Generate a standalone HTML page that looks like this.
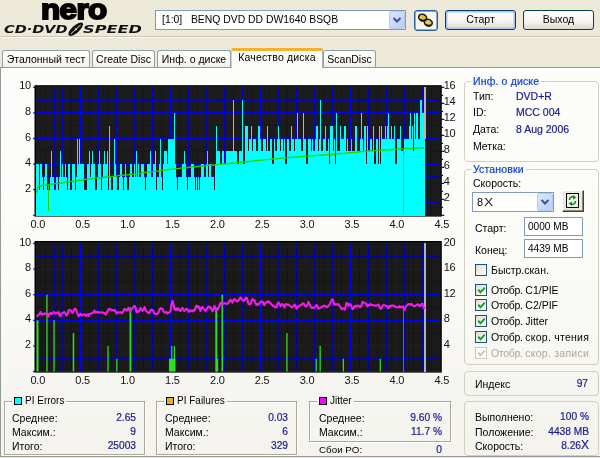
<!DOCTYPE html>
<html lang="ru">
<head>
<meta charset="utf-8">
<title>Nero CD-DVD Speed</title>
<style>
*{box-sizing:border-box;margin:0;padding:0}
html,body{width:600px;height:458px;overflow:hidden}
body{background:#ece9d8;font-family:"Liberation Sans",sans-serif;font-size:10.5px;color:#000;position:relative}
.abs,.t,.ax,.v{position:absolute;white-space:nowrap}
.t{line-height:12px;height:12px}
.v{line-height:12px;height:12px;color:#1a1a94;text-align:right;font-size:10.2px;-webkit-text-stroke:0.2px #1a1a94}
.ax{font-size:11px;line-height:14px;height:14px;color:#111;letter-spacing:-0.2px}
.ax.r{text-align:right}
#sep{position:absolute;left:0;top:36px;width:600px;height:2px;border-top:1px solid #c9c6b8;border-bottom:1px solid #fbfaf4}
#pane{position:absolute;left:0;top:67px;width:604px;height:390px;border:1px solid #919b9c;background:linear-gradient(#fdfdfb,#fbfbf8 45%,#f4f3ee);}
.tab{position:absolute;top:50px;height:18px;border:1px solid #8fa0a8;border-bottom:none;border-radius:3px 3px 0 0;background:linear-gradient(#ffffff,#f7f6f1 70%,#ecebe5);text-align:center;line-height:17px;font-size:10.5px}
.tab.act{top:48px;height:20px;background:#fcfcfb;border-top:3px solid #f2b22c;border-left-color:#c8d0d4;border-right-color:#a8b2b6;line-height:13px;z-index:3;letter-spacing:0.15px;border-radius:2px 2px 0 0}
.combo{position:absolute;border:1px solid #7f9db9;background:#fff}
.dd{position:absolute;border:1px solid #b4c8f6;border-radius:2px;background:linear-gradient(135deg,#dbe6fd,#b9cdf8)}
.btn{position:absolute;border:1px solid #003c74;border-radius:3px;background:linear-gradient(#ffffff,#f4f3ee 60%,#dcd8cc);text-align:center;font-size:10.5px}
.gb{position:absolute;border:1px solid #d0d0bf;border-radius:4px}
.gb .ttl{position:absolute;top:-7px;left:6px;letter-spacing:0.15px;-webkit-text-stroke:0.2px #0b3fe0;padding:0 2px;background:#fbfbf8;color:#0b3fe0;line-height:12px;height:12px;font-size:10.5px;white-space:nowrap}
.cg{position:absolute;border:1px solid #aca899;box-shadow:1px 1px 0 #fff, inset 1px 1px 0 #fff}
.cg .ttl{position:absolute;top:-7px;left:7px;padding:0 2px 0 2px;background:#f5f4ef;line-height:12px;height:12px;white-space:nowrap;font-size:10px}
.sq{display:inline-block;width:8px;height:8px;border:1px solid #000;vertical-align:-1px;margin-right:3px}
.cb{position:absolute;width:12px;height:12px;border:1px solid #1c5180;background:linear-gradient(135deg,#dcdcd7,#ffffff)}
.cb svg{position:absolute;left:1px;top:1px}
.edit{position:absolute;border:1px solid #7f9db9;background:#fff;line-height:18px;padding-left:3px;font-size:10.1px}
#charts{position:absolute;left:0;top:0}
#wrap{position:absolute;left:0;top:0;width:600px;height:458px;will-change:transform;opacity:0.999}
</style>
</head>
<body>
<div id="wrap">
<!-- logo -->
<div class="abs" id="nero" style="left:41.2px;top:-6px;font:bold 28px/32px 'Liberation Sans',sans-serif;letter-spacing:-0.5px;-webkit-text-stroke:1.9px #000;color:#000;transform-origin:0 0;transform:scaleX(1.12)">nero</div>
<div class="abs" id="cds" style="left:3.5px;top:23px;font:italic bold 11px/14px 'DejaVu Sans','Liberation Sans',sans-serif;transform-origin:0 0;transform:scaleX(1.32);letter-spacing:0px;color:#111">CD·DVD</div>
<svg class="abs" style="left:66px;top:21px" width="20" height="17" viewBox="0 0 20 17"><g transform="translate(9.7 8.2) rotate(-42)"><ellipse cx="0" cy="0" rx="9.2" ry="3.7" fill="#0c0c0c"/><path d="M-6.5,0.2H6.5" stroke="#e8e6da" stroke-width="0.9"/><circle cx="0" cy="0.2" r="1" fill="#f4f2e6"/></g></svg>
<div class="abs" id="spd" style="left:82.5px;top:23px;font:italic bold 11px/14px 'DejaVu Sans','Liberation Sans',sans-serif;transform-origin:0 0;transform:scaleX(1.47);color:#111">SPEED</div>

<!-- drive combo -->
<div class="combo" style="left:155px;top:10px;width:251px;height:20px"></div>
<div class="t" style="left:162px;top:14px;font-size:10.4px">[1:0]&nbsp;&nbsp; BENQ DVD DD DW1640 BSQB</div>
<div class="dd" style="left:389px;top:11px;width:16px;height:18px"><svg width="14" height="16" viewBox="0 0 14 16"><path d="M3.5,6 L7,9.5 L10.5,6" fill="none" stroke="#3a5490" stroke-width="2"/></svg></div>
<!-- icon button -->
<div class="btn" style="left:414px;top:9.5px;width:24px;height:21px;border-color:#2a5f9e;background:#f6f6f3;box-shadow:inset 0 0 0 0.5px #2a5f9e"><svg width="22" height="19" viewBox="0 0 22 19" style="position:absolute;left:0;top:0"><g stroke="#141400" stroke-width="1.5" fill="#f0c818"><ellipse cx="7.6" cy="6.6" rx="4" ry="3.3" transform="rotate(20 7.6 6.6)"/><ellipse cx="13.3" cy="11.7" rx="4" ry="3.3" transform="rotate(20 13.3 11.7)"/></g><path d="M5.5,8.5 a4,3 0 0 0 5,0.5 M11,13.6 a4,3 0 0 0 5,0.5" stroke="#141400" stroke-width="1.6" fill="none"/><ellipse cx="7.8" cy="5.6" rx="0.9" ry="1.3" fill="#9fb4e0"/><ellipse cx="13.5" cy="10.7" rx="0.9" ry="1.3" fill="#c8d4f0"/></svg></div>
<!-- buttons -->
<div class="btn" style="left:445px;top:10px;width:71px;height:20px;line-height:17px;box-shadow:inset 0 0 0 1.5px #a9c2f0">Старт</div>
<div class="btn" style="left:523px;top:10px;width:71px;height:20px;line-height:17px">Выход</div>

<div id="sep"></div>

<!-- tabs -->
<div class="tab" style="left:2px;width:88px">Эталонный тест</div>
<div class="tab" style="left:92px;width:63px">Create Disc</div>
<div class="tab" style="left:157px;width:74px">Инф. о диске</div>
<div class="tab act" style="left:231px;width:92px">Качество диска</div>
<div class="tab" style="left:323px;width:53px">ScanDisc</div>
<div id="pane"></div>

<svg id="charts" width="600" height="458" viewBox="0 0 600 458" shape-rendering="crispEdges">
<g shape-rendering="auto"><rect x="34.5" y="85.2" width="407.3" height="131.4" fill="#000"/><rect x="36" y="86.4" width="404.6" height="129" fill="#1c1c1c"/></g>
<path d="M45.0,87.3V215.3M54.0,87.3V215.3M62.9,87.3V215.3M71.9,87.3V215.3M89.9,87.3V215.3M98.8,87.3V215.3M107.8,87.3V215.3M116.8,87.3V215.3M134.8,87.3V215.3M143.7,87.3V215.3M152.7,87.3V215.3M161.7,87.3V215.3M179.6,87.3V215.3M188.6,87.3V215.3M197.6,87.3V215.3M206.6,87.3V215.3M224.5,87.3V215.3M233.5,87.3V215.3M242.5,87.3V215.3M251.5,87.3V215.3M269.4,87.3V215.3M278.4,87.3V215.3M287.4,87.3V215.3M296.4,87.3V215.3M314.3,87.3V215.3M323.3,87.3V215.3M332.3,87.3V215.3M341.2,87.3V215.3M359.2,87.3V215.3M368.2,87.3V215.3M377.2,87.3V215.3M386.1,87.3V215.3M404.1,87.3V215.3M413.1,87.3V215.3M422.0,87.3V215.3M431.0,87.3V215.3M36.0,202.5H440.0M36.0,176.9H440.0M36.0,151.3H440.0M36.0,125.7H440.0M36.0,100.1H440.0" stroke="#0000c4" stroke-width="1" fill="none"/><path d="M80.9,87.3V215.3M125.8,87.3V215.3M170.7,87.3V215.3M215.6,87.3V215.3M260.4,87.3V215.3M305.3,87.3V215.3M350.2,87.3V215.3M395.1,87.3V215.3M36.0,215.3H440.0M36.0,189.7H440.0M36.0,164.1H440.0M36.0,138.5H440.0M36.0,112.9H440.0M36.0,87.3H440.0" stroke="#0000ff" stroke-width="1" fill="none"/>
<path d="M36,216.1V164.1H37V164.1H38V164.1H39V189.7H40V164.1H41V164.1H42V176.9H43V189.7H44V176.9H45V164.1H46V164.1H47V189.7H48V189.7H49V189.7H50V176.9H51V151.3H52V176.9H53V176.9H54V189.7H55V189.7H56V176.9H57V176.9H58V189.7H59V176.9H60V151.3H61V176.9H62V164.1H63V176.9H64V176.9H65V164.1H66V176.9H67V189.7H68V164.1H69V164.1H70V189.7H71V189.7H72V164.1H73V164.1H74V164.1H75V189.7H76V176.9H77V138.5H78V164.1H79V138.5H80V164.1H81V164.1H82V164.1H83V164.1H84V189.7H85V189.7H86V189.7H87V164.1H88V164.1H89V151.3H90V176.9H91V164.1H92V151.3H93V164.1H94V164.1H95V189.7H96V189.7H97V176.9H98V164.1H99V151.3H100V164.1H101V189.7H102V176.9H103V164.1H104V151.3H105V164.1H106V164.1H107V151.3H108V189.7H109V125.7H110V176.9H111V189.7H112V189.7H113V176.9H114V138.5H115V164.1H116V176.9H117V189.7H118V189.7H119V176.9H120V164.1H121V164.1H122V176.9H123V189.7H124V176.9H125V164.1H126V176.9H127V189.7H128V189.7H129V176.9H130V164.1H131V164.1H132V176.9H133V176.9H134V164.1H135V176.9H136V151.3H137V176.9H138V164.1H139V176.9H140V176.9H141V164.1H142V164.1H143V164.1H144V176.9H145V189.7H146V176.9H147V164.1H148V164.1H149V164.1H150V151.3H151V176.9H152V176.9H153V164.1H154V164.1H155V151.3H156V189.7H157V176.9H158V176.9H159V164.1H160V138.5H161V176.9H162V189.7H163V164.1H164V151.3H165V151.3H166V151.3H167V164.1H168V138.5H169V138.5H170V138.5H171V138.5H172V138.5H173V138.5H174V112.9H175V164.1H176V176.9H177V189.7H178V176.9H179V176.9H180V176.9H181V176.9H182V164.1H183V164.1H184V151.3H185V164.1H186V176.9H187V189.7H188V176.9H189V176.9H190V176.9H191V164.1H192V164.1H193V164.1H194V176.9H195V189.7H196V176.9H197V189.7H198V176.9H199V189.7H200V176.9H201V164.1H202V164.1H203V164.1H204V176.9H205V176.9H206V164.1H207V151.3H208V176.9H209V164.1H210V164.1H211V176.9H212V176.9H213V176.9H214V189.7H215V164.1H216V125.7H217V151.3H218V151.3H219V151.3H220V164.1H221V164.1H222V151.3H223V151.3H224V164.1H225V164.1H226V151.3H227V151.3H228V151.3H229V151.3H230V151.3H231V151.3H232V151.3H233V100.1H234V151.3H235V151.3H236V151.3H237V164.1H238V164.1H239V151.3H240V151.3H241V151.3H242V100.1H243V164.1H244V164.1H245V125.7H246V125.7H247V125.7H248V151.3H249V138.5H250V138.5H251V125.7H252V151.3H253V138.5H254V138.5H255V138.5H256V151.3H257V151.3H258V125.7H259V125.7H260V138.5H261V151.3H262V151.3H263V138.5H264V138.5H265V138.5H266V151.3H267V125.7H268V151.3H269V151.3H270V138.5H271V138.5H272V164.1H273V164.1H274V138.5H275V151.3H276V151.3H277V138.5H278V125.7H279V138.5H280V151.3H281V138.5H282V138.5H283V151.3H284V138.5H285V164.1H286V164.1H287V138.5H288V138.5H289V151.3H290V151.3H291V125.7H292V138.5H293V138.5H294V151.3H295V138.5H296V138.5H297V112.9H298V138.5H299V138.5H300V138.5H301V151.3H302V151.3H303V112.9H304V138.5H305V138.5H306V164.1H307V164.1H308V138.5H309V138.5H310V138.5H311V151.3H312V138.5H313V151.3H314V151.3H315V138.5H316V125.7H317V125.7H318V151.3H319V138.5H320V100.1H321V151.3H322V151.3H323V138.5H324V138.5H325V125.7H326V151.3H327V151.3H328V138.5H329V164.1H330V125.7H331V125.7H332V125.7H333V151.3H334V138.5H335V164.1H336V112.9H337V151.3H338V151.3H339V151.3H340V125.7H341V138.5H342V138.5H343V138.5H344V125.7H345V125.7H346V151.3H347V138.5H348V151.3H349V151.3H350V151.3H351V138.5H352V151.3H353V151.3H354V151.3H355V125.7H356V125.7H357V151.3H358V151.3H359V151.3H360V138.5H361V112.9H362V138.5H363V151.3H364V125.7H365V125.7H366V164.1H367V125.7H368V151.3H369V151.3H370V138.5H371V138.5H372V151.3H373V125.7H374V164.1H375V164.1H376V138.5H377V138.5H378V164.1H379V125.7H380V164.1H381V125.7H382V138.5H383V138.5H384V138.5H385V125.7H386V138.5H387V125.7H388V112.9H389V138.5H390V138.5H391V125.7H392V138.5H393V138.5H394V125.7H395V164.1H396V164.1H397V138.5H398V138.5H399V138.5H400V125.7H401V151.3H402V151.3H403V151.3H404V138.5H405V138.5H406V138.5H407V138.5H408V138.5H409V125.7H410V112.9H411V138.5H412V125.7H413V151.3H414V112.9H415V138.5H416V112.9H417V112.9H418V138.5H419V138.5H420V100.1H421V100.1H422V112.9H423V112.9H424V112.9H425V216.1Z" fill="#00ffff"/>
<rect x="424" y="86.5" width="2" height="52.0" fill="#b4b4b4"/>
<path d="M36.5,193L37.5,189L38,186.4L39,185.9L40,185.8L41,186.0L42,185.7L43,185.5L44,185.2L45,185.2L46,185.1L47,184.8L48,184.9L49,184.8L50,184.2L51,184.1L52,184.2L53,184.3L54,183.9L55,183.6L56,183.6L57,183.5L58,183.4L59,183.2L60,183.0L61,183.1L62,183.0L63,182.5L64,182.3L65,182.2L66,182.0L67,182.2L68,182.0L69,181.6L70,181.9L71,181.7L72,181.5L73,181.0L74,181.2L75,181.1L76,180.8L77,180.5L78,180.6L79,180.4L80,180.3L81,180.4L82,180.1L83,180.0L84,179.6L85,179.5L86,179.4L87,179.1L88,179.2L89,179.1L90,179.3L91,178.8L92,178.5L93,178.8L94,178.4L95,178.2L96,178.2L97,178.0L98,177.9L99,178.0L100,177.7L101,177.8L102,177.4L103,177.6L104,177.2L105,177.3L106,177.0L107,176.9L108,176.9L109,176.6L110,176.9L111,176.7L112,176.2L113,176.5L114,176.3L115,176.1L116,176.1L117,176.0L118,175.7L119,175.5L120,175.6L121,175.2L122,175.5L123,175.3L124,175.1L125,174.9L126,175.0L127,174.8L128,174.9L129,174.7L130,174.5L131,174.5L132,174.0L133,174.2L134,174.1L135,174.0L136,174.0L137,173.7L138,173.3L139,173.1L140,173.3L141,173.3L142,172.9L143,172.8L144,172.5L145,172.3L146,172.5L147,172.2L148,172.1L149,172.1L150,171.7L151,172.0L152,171.9L153,171.4L154,171.5L155,171.4L156,171.2L157,171.2L158,171.1L159,170.7L160,170.8L161,170.4L162,170.5L163,170.3L164,170.4L165,169.9L166,170.2L167,169.7L168,169.5L169,169.7L170,169.3L171,169.4L172,169.2L173,169.2L174,169.1L175,169.0L176,168.6L177,168.7L178,168.6L179,168.7L180,168.1L181,168.1L182,168.1L183,168.1L184,167.8L185,167.8L186,167.8L187,167.8L188,167.5L189,167.3L190,167.0L191,167.1L192,166.9L193,166.7L194,166.8L195,167.0L196,166.9L197,166.5L198,166.6L199,166.5L200,166.0L201,165.9L202,166.1L203,165.8L204,165.7L205,165.8L206,165.7L207,165.4L208,165.2L209,165.3L210,165.2L211,165.3L212,165.0L213,164.8L214,165.1L215,164.8L216,164.6L217,164.7L218,164.4L219,164.3L220,164.1L221,164.1L222,164.0L223,163.9L224,163.9L225,164.0L226,163.6L227,163.4L228,163.7L229,163.3L230,163.1L231,163.2L232,163.4L233,162.9L234,163.2L235,163.0L236,163.0L237,162.6L238,162.3L239,162.5L240,162.4L241,162.1L242,162.4L243,162.0L244,161.8L245,162.0L246,161.9L247,161.6L248,161.3L249,161.5L250,161.3L251,161.4L252,161.1L253,160.8L254,160.7L255,161.0L256,160.6L257,160.6L258,160.3L259,160.6L260,160.3L261,160.4L262,160.1L263,159.8L264,159.8L265,159.7L266,159.6L267,159.7L268,159.6L269,159.3L270,159.2L271,159.2L272,159.2L273,158.8L274,159.0L275,158.6L276,158.7L277,158.8L278,158.6L279,158.4L280,158.3L281,158.4L282,158.1L283,158.1L284,157.9L285,157.7L286,157.9L287,157.6L288,157.6L289,157.7L290,157.3L291,157.2L292,157.5L293,157.2L294,157.3L295,156.9L296,156.9L297,157.0L298,156.8L299,156.8L300,156.6L301,156.7L302,156.5L303,156.6L304,156.5L305,156.1L306,156.4L307,156.1L308,156.1L309,155.9L310,155.8L311,156.0L312,156.0L313,155.5L314,155.6L315,155.7L316,155.6L317,155.6L318,155.3L319,155.0L320,155.4L321,155.3L322,155.0L323,154.9L324,154.9L325,155.0L326,154.6L327,154.5L328,154.9L329,154.4L330,154.6L331,154.5L332,154.5L333,154.5L334,154.0L335,154.2L336,153.8L337,153.7L338,153.9L339,153.5L340,153.8L341,153.8L342,153.5L343,153.4L344,153.3L345,153.3L346,152.9L347,152.9L348,153.2L349,152.7L350,152.6L351,152.8L352,152.3L353,152.5L354,152.6L355,152.2L356,152.1L357,152.3L358,151.9L359,152.0L360,151.9L361,151.6L362,151.7L363,151.7L364,151.3L365,151.3L366,151.6L367,151.4L368,151.0L369,151.0L370,151.0L371,150.9L372,150.9L373,151.0L374,150.9L375,150.6L376,150.6L377,150.3L378,150.4L379,150.6L380,150.1L381,150.3L382,150.1L383,150.3L384,149.9L385,150.0L386,149.8L387,150.1L388,149.6L389,149.8L390,149.7L391,149.8L392,149.5L393,149.7L394,149.2L395,149.4L396,149.5L397,149.0L398,149.0L399,149.2L400,149.0L401,149.1L402,148.8L403,148.9L404,149.0L405,148.7L406,148.6L407,148.5L408,148.5L409,148.4L410,148.6L411,148.5L412,148.4L413,148.3L414,148.4L415,148.4L416,148.5L417,148.1L418,147.9L419,147.9L420,147.8L421,147.9L422,148.1L423,147.9L424,148.0" stroke="#22d400" stroke-width="1.3" fill="none" shape-rendering="auto"/>
<path d="M48.3,184.7V210.5M403.5,148.9V213.5" stroke="#22d400" stroke-width="1.2" fill="none"/>
<path d="M441.3,215.3h3M441.3,207.3h1.8M441.3,199.3h3M441.3,191.3h1.8M441.3,183.3h3M441.3,175.3h1.8M441.3,167.3h3M441.3,159.3h1.8M441.3,151.3h3M441.3,143.3h1.8M441.3,135.3h3M441.3,127.3h1.8M441.3,119.3h3M441.3,111.3h1.8M441.3,103.3h3M441.3,95.3h1.8M441.3,87.3h3M33.2,215.3h1.6M33.2,189.7h1.6M33.2,164.1h1.6M33.2,138.5h1.6M33.2,112.9h1.6M33.2,87.3h1.6" stroke="#0000e0" stroke-width="1.3" shape-rendering="auto"/>
<g shape-rendering="auto"><rect x="34.5" y="241.0" width="407.3" height="131.6" fill="#000"/><rect x="36" y="242.3" width="404.6" height="129.3" fill="#1a1a1a"/></g>
<path d="M45.0,243.5V371.5M54.0,243.5V371.5M62.9,243.5V371.5M71.9,243.5V371.5M89.9,243.5V371.5M98.8,243.5V371.5M107.8,243.5V371.5M116.8,243.5V371.5M134.8,243.5V371.5M143.7,243.5V371.5M152.7,243.5V371.5M161.7,243.5V371.5M179.6,243.5V371.5M188.6,243.5V371.5M197.6,243.5V371.5M206.6,243.5V371.5M224.5,243.5V371.5M233.5,243.5V371.5M242.5,243.5V371.5M251.5,243.5V371.5M269.4,243.5V371.5M278.4,243.5V371.5M287.4,243.5V371.5M296.4,243.5V371.5M314.3,243.5V371.5M323.3,243.5V371.5M332.3,243.5V371.5M341.2,243.5V371.5M359.2,243.5V371.5M368.2,243.5V371.5M377.2,243.5V371.5M386.1,243.5V371.5M404.1,243.5V371.5M413.1,243.5V371.5M422.0,243.5V371.5M431.0,243.5V371.5M36.0,358.7H440.0M36.0,333.1H440.0M36.0,307.5H440.0M36.0,281.9H440.0M36.0,256.3H440.0" stroke="#0000a4" stroke-width="1" fill="none"/><path d="M80.9,243.5V371.5M125.8,243.5V371.5M170.7,243.5V371.5M215.6,243.5V371.5M260.4,243.5V371.5M305.3,243.5V371.5M350.2,243.5V371.5M395.1,243.5V371.5M36.0,371.5H440.0M36.0,345.9H440.0M36.0,320.3H440.0M36.0,294.7H440.0M36.0,269.1H440.0M36.0,243.5H440.0" stroke="#0000ff" stroke-width="1" fill="none"/>
<g fill="#2ae01e" shape-rendering="auto"><rect x="36.5" y="320.3" width="2" height="51.2"/><rect x="46.3" y="294.7" width="1.3" height="76.8"/><rect x="53.4" y="320.3" width="1.3" height="51.2"/><rect x="72.7" y="333.1" width="1.5" height="38.4"/><rect x="107.4" y="345.9" width="1.3" height="25.6"/><rect x="116.2" y="358.7" width="1.3" height="12.8"/><rect x="129.5" y="307.5" width="1.8" height="64.0"/><rect x="169.0" y="358.7" width="6.5" height="12.8"/><rect x="171.2" y="345.9" width="1.2" height="25.6"/><rect x="173.8" y="345.9" width="1.2" height="25.6"/><rect x="215.3" y="307.5" width="2" height="64.0"/><rect x="216.0" y="358.7" width="2.2" height="12.8"/><rect x="221.5" y="294.7" width="1.6" height="76.8"/><rect x="286.3" y="333.1" width="1.3" height="38.4"/><rect x="315.6" y="358.7" width="1.3" height="12.8"/><rect x="319.5" y="345.9" width="1.3" height="25.6"/><rect x="342.7" y="358.7" width="1.3" height="12.8"/><rect x="379.6" y="358.7" width="1.3" height="12.8"/></g>
<rect x="424" y="242.5" width="2" height="129" fill="#b4b4b4"/>
<path d="M403.5,304.9V371.5" stroke="#e020d0" stroke-width="1.4" fill="none"/>
<path d="M36.5,316.5L37.5,316.1L38.5,314.8L39.5,313.9L40.5,312.0L41.5,314.4L42.5,314.5L43.5,313.9L44.5,313.3L45.5,314.0L46.5,313.7L47.5,313.7L48.5,316.4L49.5,313.7L50.5,312.9L51.5,314.1L52.5,313.5L53.5,312.0L54.5,312.4L55.5,313.8L56.5,313.4L57.5,312.5L58.5,312.1L59.5,315.2L60.5,316.3L61.5,313.5L62.5,312.7L63.5,312.6L64.5,312.0L65.5,313.5L66.5,315.3L67.5,314.2L68.5,310.5L69.5,310.0L70.5,310.5L71.5,311.1L72.5,313.1L73.5,311.3L74.5,309.2L75.5,308.6L76.5,311.0L77.5,313.6L78.5,316.1L79.5,315.4L80.5,313.7L81.5,315.1L82.5,315.2L83.5,314.5L84.5,314.2L85.5,315.7L86.5,315.6L87.5,314.4L88.5,316.0L89.5,314.0L90.5,313.6L91.5,313.4L92.5,313.3L93.5,312.2L94.5,310.6L95.5,312.8L96.5,312.4L97.5,311.7L98.5,312.6L99.5,312.5L100.5,312.3L101.5,312.5L102.5,312.4L103.5,313.1L104.5,313.0L105.5,314.5L106.5,313.3L107.5,311.2L108.5,309.2L109.5,308.8L110.5,309.3L111.5,310.1L112.5,310.1L113.5,310.5L114.5,309.8L115.5,311.3L116.5,313.5L117.5,312.3L118.5,312.8L119.5,312.4L120.5,312.0L121.5,313.4L122.5,312.9L123.5,310.7L124.5,308.8L125.5,309.6L126.5,310.6L127.5,309.9L128.5,307.7L129.5,310.4L130.5,311.1L131.5,309.1L132.5,308.4L133.5,307.0L134.5,305.8L135.5,307.4L136.5,311.9L137.5,311.0L138.5,312.0L139.5,310.6L140.5,307.9L141.5,309.5L142.5,310.9L143.5,309.7L144.5,307.0L145.5,309.6L146.5,311.3L147.5,312.2L148.5,312.9L149.5,313.2L150.5,310.3L151.5,309.6L152.5,310.1L153.5,311.3L154.5,313.6L155.5,313.9L156.5,314.0L157.5,313.8L158.5,312.7L159.5,309.4L160.5,308.2L161.5,308.9L162.5,308.6L163.5,311.4L164.5,312.4L165.5,312.8L166.5,311.8L167.5,313.5L168.5,312.7L169.5,312.3L170.5,311.1L171.5,304.3L172.5,300.8L173.5,304.5L174.5,309.3L175.5,309.9L176.5,308.4L177.5,309.9L178.5,308.4L179.5,310.3L180.5,310.9L181.5,309.1L182.5,307.9L183.5,309.9L184.5,311.0L185.5,309.6L186.5,308.6L187.5,309.3L188.5,311.8L189.5,311.5L190.5,310.0L191.5,311.1L192.5,311.5L193.5,310.1L194.5,310.7L195.5,307.5L196.5,305.6L197.5,307.6L198.5,306.2L199.5,307.8L200.5,311.1L201.5,307.6L202.5,306.8L203.5,308.8L204.5,309.8L205.5,310.8L206.5,309.6L207.5,307.4L208.5,306.4L209.5,307.6L210.5,307.2L211.5,309.2L212.5,311.3L213.5,309.5L214.5,305.8L215.5,308.5L216.5,310.5L217.5,309.7L218.5,307.6L219.5,305.9L220.5,302.7L221.5,302.7L222.5,303.5L223.5,303.8L224.5,303.0L225.5,303.8L226.5,303.6L227.5,303.8L228.5,302.6L229.5,300.9L230.5,299.7L231.5,301.5L232.5,302.6L233.5,299.9L234.5,299.0L235.5,300.1L236.5,301.4L237.5,301.3L238.5,300.2L239.5,298.9L240.5,297.4L241.5,298.7L242.5,300.0L243.5,300.9L244.5,300.5L245.5,298.1L246.5,297.5L247.5,299.9L248.5,303.9L249.5,304.1L250.5,304.0L251.5,301.6L252.5,299.0L253.5,300.5L254.5,300.1L255.5,303.0L256.5,304.9L257.5,304.1L258.5,304.7L259.5,303.0L260.5,302.1L261.5,301.4L262.5,301.5L263.5,303.6L264.5,305.2L265.5,302.7L266.5,302.1L267.5,302.2L268.5,301.1L269.5,302.4L270.5,303.1L271.5,304.8L272.5,305.0L273.5,306.4L274.5,306.3L275.5,307.5L276.5,307.2L277.5,303.8L278.5,302.3L279.5,304.2L280.5,306.1L281.5,304.4L282.5,304.0L283.5,305.6L284.5,307.5L285.5,304.2L286.5,304.1L287.5,304.8L288.5,304.5L289.5,305.6L290.5,306.1L291.5,307.3L292.5,306.7L293.5,306.5L294.5,304.5L295.5,305.6L296.5,308.8L297.5,307.9L298.5,306.5L299.5,305.6L300.5,305.4L301.5,304.8L302.5,303.5L303.5,303.4L304.5,304.9L305.5,306.5L306.5,306.3L307.5,304.6L308.5,301.9L309.5,304.1L310.5,306.4L311.5,307.9L312.5,307.7L313.5,308.0L314.5,307.2L315.5,306.5L316.5,304.9L317.5,306.1L318.5,308.6L319.5,308.1L320.5,307.7L321.5,307.1L322.5,306.5L323.5,305.9L324.5,305.7L325.5,306.3L326.5,307.1L327.5,307.0L328.5,305.7L329.5,304.6L330.5,302.8L331.5,300.4L332.5,299.0L333.5,302.1L334.5,304.6L335.5,304.4L336.5,304.3L337.5,304.6L338.5,304.1L339.5,306.1L340.5,307.2L341.5,309.1L342.5,308.5L343.5,308.2L344.5,309.8L345.5,307.1L346.5,303.1L347.5,303.5L348.5,305.9L349.5,304.1L350.5,304.4L351.5,306.1L352.5,309.2L353.5,308.2L354.5,306.4L355.5,305.8L356.5,306.8L357.5,305.6L358.5,305.6L359.5,307.0L360.5,307.1L361.5,305.6L362.5,301.8L363.5,302.5L364.5,302.8L365.5,303.6L366.5,303.9L367.5,306.5L368.5,305.1L369.5,305.0L370.5,304.1L371.5,304.8L372.5,305.3L373.5,305.3L374.5,305.3L375.5,305.7L376.5,305.7L377.5,305.0L378.5,304.5L379.5,307.1L380.5,308.8L381.5,308.3L382.5,306.0L383.5,304.8L384.5,305.4L385.5,305.8L386.5,305.8L387.5,306.7L388.5,308.3L389.5,305.8L390.5,306.4L391.5,305.6L392.5,305.8L393.5,305.5L394.5,306.1L395.5,307.1L396.5,307.2L397.5,307.1L398.5,307.5L399.5,306.2L400.5,307.3L401.5,307.0L402.5,306.7L403.5,308.2L404.5,309.8L405.5,307.0L406.5,305.5L407.5,305.1L408.5,304.1L409.5,304.2L410.5,304.7L411.5,303.9L412.5,305.2L413.5,305.7L414.5,306.2L415.5,305.7L416.5,305.1L417.5,304.2L418.5,304.6L419.5,306.1L420.5,306.1L421.5,304.0L422.5,303.7L423.5,306.5L424.5,309.1" stroke="#f41af0" stroke-width="2.1" stroke-linejoin="round" fill="none" shape-rendering="auto"/>
<path d="M33.2,371.5h1.6M33.2,345.9h1.6M33.2,320.3h1.6M33.2,294.7h1.6M33.2,269.1h1.6M33.2,243.5h1.6" stroke="#0000e0" stroke-width="1.3" shape-rendering="auto"/>
</svg>
<div class="ax r" style="left:8px;width:23px;top:78.3px">10</div><div class="ax r" style="left:8px;width:23px;top:234.5px">10</div><div class="ax r" style="left:8px;width:23px;top:103.9px">8</div><div class="ax r" style="left:8px;width:23px;top:260.1px">8</div><div class="ax r" style="left:8px;width:23px;top:129.5px">6</div><div class="ax r" style="left:8px;width:23px;top:285.7px">6</div><div class="ax r" style="left:8px;width:23px;top:155.1px">4</div><div class="ax r" style="left:8px;width:23px;top:311.3px">4</div><div class="ax r" style="left:8px;width:23px;top:180.7px">2</div><div class="ax r" style="left:8px;width:23px;top:336.9px">2</div><div class="ax" style="left:443.7px;top:78.3px">16</div><div class="ax" style="left:443.7px;top:94.3px">14</div><div class="ax" style="left:443.7px;top:110.3px">12</div><div class="ax" style="left:443.7px;top:126.3px">10</div><div class="ax" style="left:443.7px;top:142.3px">8</div><div class="ax" style="left:443.7px;top:158.3px">6</div><div class="ax" style="left:443.7px;top:174.3px">4</div><div class="ax" style="left:443.7px;top:190.3px">2</div><div class="ax" style="left:443.7px;top:234.5px">20</div><div class="ax" style="left:443.7px;top:260.1px">16</div><div class="ax" style="left:443.7px;top:285.7px">12</div><div class="ax" style="left:443.7px;top:311.3px">8</div><div class="ax" style="left:443.7px;top:336.9px">4</div><div class="ax" style="left:30.4px;top:216.5px">0.0</div><div class="ax" style="left:30.4px;top:373px">0.0</div><div class="ax" style="left:75.3px;top:216.5px">0.5</div><div class="ax" style="left:75.3px;top:373px">0.5</div><div class="ax" style="left:120.2px;top:216.5px">1.0</div><div class="ax" style="left:120.2px;top:373px">1.0</div><div class="ax" style="left:165.1px;top:216.5px">1.5</div><div class="ax" style="left:165.1px;top:373px">1.5</div><div class="ax" style="left:210.0px;top:216.5px">2.0</div><div class="ax" style="left:210.0px;top:373px">2.0</div><div class="ax" style="left:254.8px;top:216.5px">2.5</div><div class="ax" style="left:254.8px;top:373px">2.5</div><div class="ax" style="left:299.7px;top:216.5px">3.0</div><div class="ax" style="left:299.7px;top:373px">3.0</div><div class="ax" style="left:344.6px;top:216.5px">3.5</div><div class="ax" style="left:344.6px;top:373px">3.5</div><div class="ax" style="left:389.5px;top:216.5px">4.0</div><div class="ax" style="left:389.5px;top:373px">4.0</div><div class="ax" style="left:434.4px;top:216.5px">4.5</div><div class="ax" style="left:434.4px;top:373px">4.5</div>

<!-- disc info group -->
<div class="gb" style="left:464px;top:81px;width:135px;height:81px"><span class="ttl">Инф. о диске</span></div>
<div class="t" style="left:473px;top:90px">Тип:</div><div class="t" style="left:516px;top:90px;color:#1a1a94;-webkit-text-stroke:0.2px #1a1a94">DVD+R</div>
<div class="t" style="left:473px;top:106px">ID:</div><div class="t" style="left:516px;top:106px;color:#1a1a94;-webkit-text-stroke:0.2px #1a1a94">MCC 004</div>
<div class="t" style="left:473px;top:123px">Дата:</div><div class="t" style="left:516px;top:123px;color:#1a1a94;-webkit-text-stroke:0.2px #1a1a94">8 Aug 2006</div>
<div class="t" style="left:473px;top:140px">Метка:</div>

<!-- settings group -->
<div class="gb" style="left:464px;top:169px;width:135px;height:196px"><span class="ttl">Установки</span></div>
<div class="t" style="left:473px;top:177px">Скорость:</div>
<div class="combo" style="left:472px;top:192px;width:82px;height:20px"></div>
<div class="t" style="left:477px;top:196px;font-size:11px">8<span style="display:inline-block;font-size:11.5px;transform:scaleX(1.2);transform-origin:0 50%;margin-left:1px;color:#222">X</span></div>
<div class="dd" style="left:537px;top:193px;width:16px;height:18px"><svg width="14" height="16" viewBox="0 0 14 16"><path d="M3.5,6 L7,9.5 L10.5,6" fill="none" stroke="#3a5490" stroke-width="2"/></svg></div>
<div class="abs" style="left:562px;top:190px;width:22px;height:22px;background:#ece9d8;border:1px solid;border-color:#fff #404040 #404040 #fff;box-shadow:inset -1px -1px 0 #8a887c"><div style="position:absolute;left:3px;top:2px;width:13px;height:15px;border:1px solid #000;background:#f4f4ee"><svg width="11" height="13" viewBox="0 0 11 13"><path d="M2.5,6 A3,3 0 0 1 7.5,3.5 M8.5,7 A3,3 0 0 1 3.5,9.5" fill="none" stroke="#109018" stroke-width="1.6"/><path d="M6,1 L9.5,3.5 L6,5.5Z M5,7.5 L1.5,9.5 L5,12Z" fill="#109018"/></svg></div></div>
<div class="t" style="left:475px;top:222px">Старт:</div>
<div class="edit" style="left:524px;top:217px;width:59px;height:19px">0000 MB</div>
<div class="t" style="left:475px;top:243.5px">Конец:</div>
<div class="edit" style="left:524px;top:239px;width:59px;height:19px">4439 MB</div>

<div class="cb" style="left:475px;top:264px"></div><div class="t" style="left:491px;top:264px">Быстр.скан.</div>
<div class="cb" style="left:475px;top:284px"><svg width="9" height="9" viewBox="0 0 9 9"><path d="M1.2,3.8 L3.5,6.3 L7.8,1.6" fill="none" stroke="#21a121" stroke-width="2"/></svg></div><div class="t" style="left:491px;top:284px"><span style="letter-spacing:-0.3px">Отобр. </span>C1/PIE</div>
<div class="cb" style="left:475px;top:299px"><svg width="9" height="9" viewBox="0 0 9 9"><path d="M1.2,3.8 L3.5,6.3 L7.8,1.6" fill="none" stroke="#21a121" stroke-width="2"/></svg></div><div class="t" style="left:491px;top:299px"><span style="letter-spacing:-0.3px">Отобр. </span>C2/PIF</div>
<div class="cb" style="left:475px;top:315px"><svg width="9" height="9" viewBox="0 0 9 9"><path d="M1.2,3.8 L3.5,6.3 L7.8,1.6" fill="none" stroke="#21a121" stroke-width="2"/></svg></div><div class="t" style="left:491px;top:315px"><span style="letter-spacing:-0.3px">Отобр. </span>Jitter</div>
<div class="cb" style="left:475px;top:331px"><svg width="9" height="9" viewBox="0 0 9 9"><path d="M1.2,3.8 L3.5,6.3 L7.8,1.6" fill="none" stroke="#21a121" stroke-width="2"/></svg></div><div class="t" style="left:491px;top:331px"><span style="letter-spacing:-0.3px">Отобр. </span><span style="letter-spacing:0.25px">скор. чтения</span></div>
<div class="cb" style="left:475px;top:347px;border-color:#cac8bb;background:#fff"><svg width="9" height="9" viewBox="0 0 9 9"><path d="M1.2,3.8 L3.5,6.3 L7.8,1.6" fill="none" stroke="#cac8bb" stroke-width="2"/></svg></div><div class="t" style="left:491px;top:347px;color:#aca899"><span style="letter-spacing:-0.3px">Отобр. </span><span style="letter-spacing:0.25px">скор. записи</span></div>

<!-- index group -->
<div class="gb" style="left:464px;top:371px;width:135px;height:25px"></div>
<div class="t" style="left:475px;top:378px">Индекс</div><div class="v" style="left:540px;width:48px;top:378px">97</div>

<!-- progress group -->
<div class="gb" style="left:464px;top:401px;width:135px;height:55px"></div>
<div class="t" style="left:475px;top:411px">Выполнено:</div><div class="v" style="left:530px;width:59px;top:411px">100 %</div>
<div class="t" style="left:475px;top:426px">Положение:</div><div class="v" style="left:530px;width:59px;top:426px">4438 MB</div>
<div class="t" style="left:475px;top:440px">Скорость:</div><div class="v" style="left:530px;width:59px;top:440px">8.26<span style="font-size:12px;line-height:10px">X</span></div>

<!-- PI Errors -->
<div class="cg" style="left:4px;top:401px;width:141px;height:54px"><span class="ttl"><span class="sq" style="background:#00ffff"></span>PI Errors</span></div>
<div class="t" style="left:12px;top:412px">Среднее:</div><div class="v" style="left:86px;width:50px;top:412px">2.65</div>
<div class="t" style="left:12px;top:426px">Максим.:</div><div class="v" style="left:86px;width:50px;top:426px">9</div>
<div class="t" style="left:12px;top:440px">Итого:</div><div class="v" style="left:86px;width:50px;top:440px">25003</div>

<!-- PI Failures -->
<div class="cg" style="left:156px;top:401px;width:141px;height:54px"><span class="ttl"><span class="sq" style="background:#e8b020"></span>PI Failures</span></div>
<div class="t" style="left:165px;top:412px">Среднее:</div><div class="v" style="left:238px;width:50px;top:412px">0.03</div>
<div class="t" style="left:165px;top:426px">Максим.:</div><div class="v" style="left:238px;width:50px;top:426px">6</div>
<div class="t" style="left:165px;top:440px">Итого:</div><div class="v" style="left:238px;width:50px;top:440px">329</div>

<!-- Jitter -->
<div class="cg" style="left:309px;top:401px;width:142px;height:41px"><span class="ttl"><span class="sq" style="background:#ff00ff"></span>Jitter</span></div>
<div class="t" style="left:319px;top:412px">Среднее:</div><div class="v" style="left:392px;width:50px;top:412px">9.60 %</div>
<div class="t" style="left:319px;top:426px">Максим.:</div><div class="v" style="left:392px;width:50px;top:426px">11.7 %</div>
<div class="t" style="left:319px;top:444px;font-size:9.8px">Сбои PO:</div><div class="v" style="left:392px;width:50px;top:444px">0</div>
</div>
</body>
</html>
